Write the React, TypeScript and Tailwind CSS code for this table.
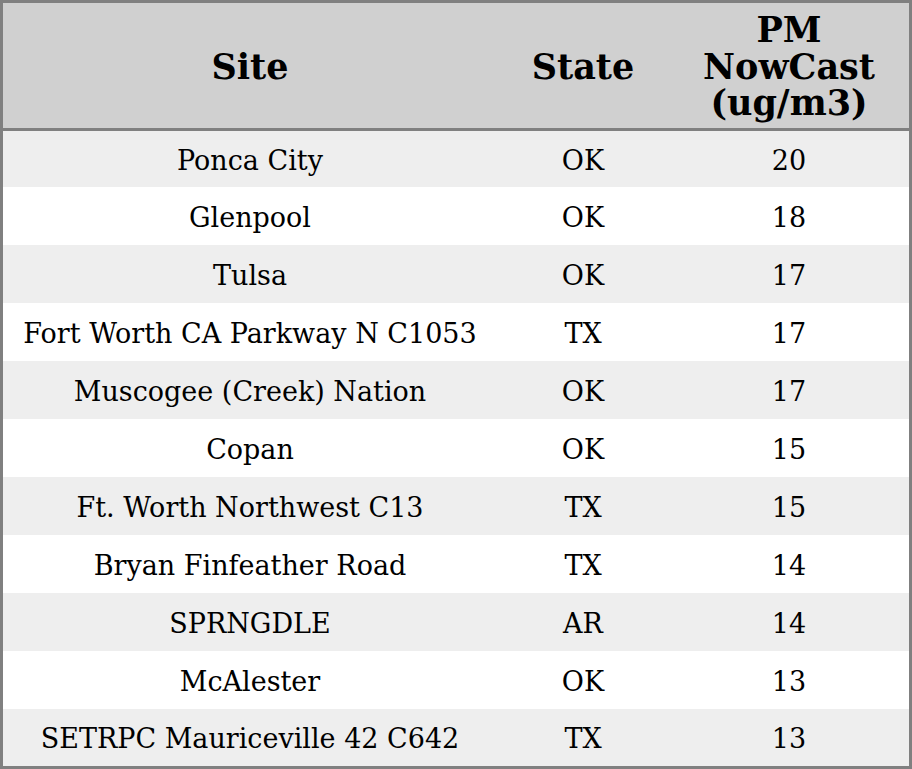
const rows: [string, string, string][] = [
  ['Ponca City', 'OK', '20'],
  ['Glenpool', 'OK', '18'],
  ['Tulsa', 'OK', '17'],
  ['Fort Worth CA Parkway N C1053', 'TX', '17'],
  ['Muscogee (Creek) Nation', 'OK', '17'],
  ['Copan', 'OK', '15'],
  ['Ft. Worth Northwest C13', 'TX', '15'],
  ['Bryan Finfeather Road', 'TX', '14'],
  ['SPRNGDLE', 'AR', '14'],
  ['McAlester', 'OK', '13'],
  ['SETRPC Mauriceville 42 C642', 'TX', '13'],
]

export default function App() {
  return (
    <div className="w-[912px] h-[769px] border-[3px] border-[#808080] bg-white font-['DejaVu_Serif',serif] text-black">
      {/* header */}
      <div className="grid grid-cols-[494px_172px_240px] h-[128px] pt-[3px] bg-[#d0d0d0] border-b-[3px] border-[#808080] text-[35px] leading-[36.5px] font-bold">
        <div className="flex items-center justify-center text-center">Site</div>
        <div className="flex items-center justify-center text-center">State</div>
        <div className="flex items-center justify-center text-center">
          PM
          <br />
          NowCast
          <br />
          (ug/m3)
        </div>
      </div>

      {/* rows */}
      <div className="text-[27px] leading-none">
        {rows.map(([site, state, pm], i) => (
          <div
            key={site}
            className={
              'grid grid-cols-[494px_172px_240px] items-center pt-[2px] text-center ' +
              (i % 2 === 0 ? 'bg-[#eeeeee] ' : 'bg-white ') +
              (i === 0 ? 'h-[56px]' : i === rows.length - 1 ? 'h-[57px]' : 'h-[58px]')
            }
          >
            <div>{site}</div>
            <div>{state}</div>
            <div>{pm}</div>
          </div>
        ))}
      </div>
    </div>
  )
}
